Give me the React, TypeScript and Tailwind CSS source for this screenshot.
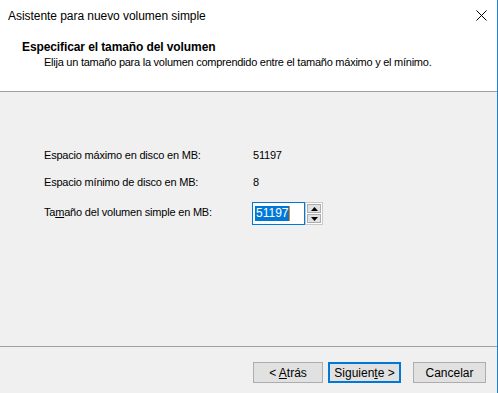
import React from 'react';

const App = () => {
  return (
    <div className="w-[498px] h-[393px] bg-[#f0f0f0] border-r border-[#1883d7] flex flex-col font-['Liberation_Sans',Arial,sans-serif] text-[11px] text-black overflow-hidden">
      {/* barra de título */}
      <div className="h-[31px] bg-white flex items-start justify-between text-[12px]">
        <span className="pl-2 pt-[9px] leading-[14px] tracking-[-0.05px]">Asistente para nuevo volumen simple</span>
        <div className="h-[31px] flex items-center pr-[10px]">
          <svg width="11" height="11" viewBox="0 0 11 11" className="text-black">
            <path d="M0.5 0.5 L10.5 10.5 M10.5 0.5 L0.5 10.5" stroke="currentColor" strokeWidth="1" />
          </svg>
        </div>
      </div>

      {/* cabecera */}
      <div className="h-[61px] bg-white border-b border-[#a0a0a0]">
        <div className="pl-[22px] pt-[9px] font-bold text-[12px] tracking-[-0.1px] leading-[14px]">Especificar el tamaño del volumen</div>
        <div className="pl-[44px] pt-[1px] leading-[14px] tracking-[-0.25px]">
          Elija un tamaño para la volumen comprendido entre el tamaño máximo y el mínimo.
        </div>
      </div>

      {/* cuerpo */}
      <div className="flex-1 pl-[44px] pt-[56px] tracking-[-0.2px]">
        <div className="grid grid-cols-[209px_auto] gap-y-[13px] items-center">
          <span className="leading-[14px]">Espacio máximo en disco en MB:</span>
          <span className="leading-[14px]">51197</span>
          <span className="leading-[14px]">Espacio mínimo de disco en MB:</span>
          <span className="leading-[14px]">8</span>
          <span className="leading-[14px] -mt-[3px]">
            Ta<span className="underline">m</span>año del volumen simple en MB:
          </span>
          <div className="flex items-stretch h-[23px] -ml-[1px]">
            <div className="w-[53px] border border-[#0078d7] bg-white flex items-center pl-[2px]">
              <span className="bg-[#0078d7] text-white leading-[15px] px-[1px] text-[12px] tracking-normal">51197</span>
              <span className="w-[1px] h-[15px] bg-[#f08010]"></span>
            </div>
            <div className="w-[18px] border border-[#c8c8c8] bg-white flex flex-col p-[1px] gap-[1px]">
              <div className="flex-1 bg-[#e1e1e1] border border-[#adadad] flex items-center justify-center">
                <svg width="7" height="4" viewBox="0 0 7 4"><path d="M3.5 0 L7 4 L0 4 Z" fill="#000" /></svg>
              </div>
              <div className="flex-1 bg-[#e1e1e1] border border-[#adadad] flex items-center justify-center">
                <svg width="7" height="4" viewBox="0 0 7 4"><path d="M0 0 L7 0 L3.5 4 Z" fill="#000" /></svg>
              </div>
            </div>
          </div>
        </div>
      </div>

      {/* pie */}
      <div className="h-[47px] border-t border-[#a0a0a0] flex items-start pt-[15px] pl-[253px] text-[12px]">
        <button className="w-[70px] h-[21px] bg-[#e1e1e1] border border-[#adadad] leading-[14px]">
          &lt; <span className="underline">A</span>trás
        </button>
        <button className="ml-[5px] w-[73px] h-[21px] bg-[#e1e1e1] border-2 border-[#0078d7] leading-[14px]">
          Siguien<span className="underline">t</span>e &gt;
        </button>
        <button className="ml-[12px] w-[73px] h-[21px] bg-[#e1e1e1] border border-[#adadad] leading-[14px]">
          Cancelar
        </button>
      </div>
    </div>
  );
};

export default App;
